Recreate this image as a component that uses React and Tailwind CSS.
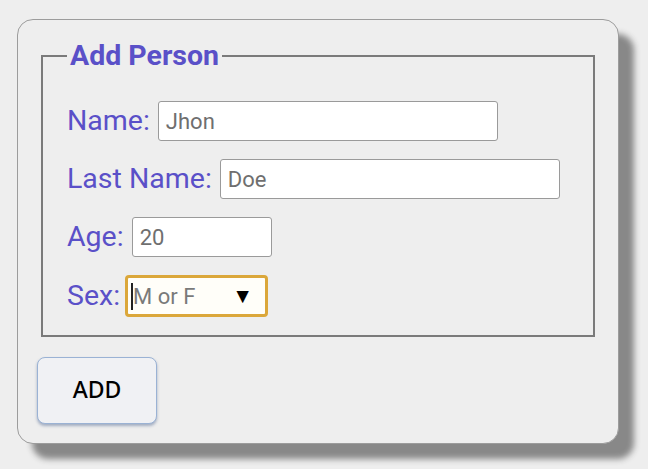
export default function App() {
  const rows = [
    { label: 'Name:', value: 'Jhon', w: 'w-[340px]' },
    { label: 'Last Name:', value: 'Doe', w: 'w-[340px]' },
    { label: 'Age:', value: '20', w: 'w-[140px]' },
  ]

  return (
    <div className="min-h-[469px] w-[648px] bg-[#eeeeee] pt-[19px] pl-[17px] font-['Roboto',sans-serif]">
      <div className="w-[602px] h-[425px] rounded-[16px] border border-[#9c9c9c] bg-[#eeeeee] shadow-[15px_15px_6px_#888888] pt-[19px] px-[23px]">
        <fieldset className="border-2 border-[#7a7a7a] pl-[24px] pr-4 pt-[29px] pb-[17px] h-[298px]">
          <legend className="px-[3px] text-[28.5px] leading-[33px] font-bold text-[#5a50c8]">Add Person</legend>
          <div className="flex flex-col gap-[18px]">
            {rows.map(r => (
              <div key={r.label} className="flex items-center gap-[8px]">
                <span className="text-[28.5px] leading-none text-[#5a50c8]">{r.label}</span>
                <div className={`${r.w} h-[40px] rounded-[3px] border border-[#9a9a9a] bg-white flex items-center px-[7px] text-[22px] text-[#6f6f6f]`}>
                  {r.value}
                </div>
              </div>
            ))}
            <div className="flex items-center gap-[5px]">
              <span className="text-[28.5px] leading-none text-[#5a50c8]">Sex:</span>
              <div className="w-[143px] h-[42px] rounded-[4px] border-[3px] border-[#dba73a] bg-[#fffef9] flex items-center pl-[3px] pr-[12px]">
                <span className="w-[2px] h-[27px] bg-[#222]" />
                <span className="text-[22px] text-[#7a7a7a]">M or F</span>
                <span className="ml-auto text-[21px] leading-none text-black">▼</span>
              </div>
            </div>
          </div>
        </fieldset>
        <button className="mt-[20px] -ml-[4px] w-[120px] h-[67px] rounded-[8px] border border-[#9ab2d4] bg-[#f0f1f4] shadow-[0_2px_3px_rgba(70,95,140,0.45)] text-[23px] font-medium text-black font-['Noto_Sans',sans-serif] pb-[3px]">
          ADD
        </button>
      </div>
    </div>
  )
}
